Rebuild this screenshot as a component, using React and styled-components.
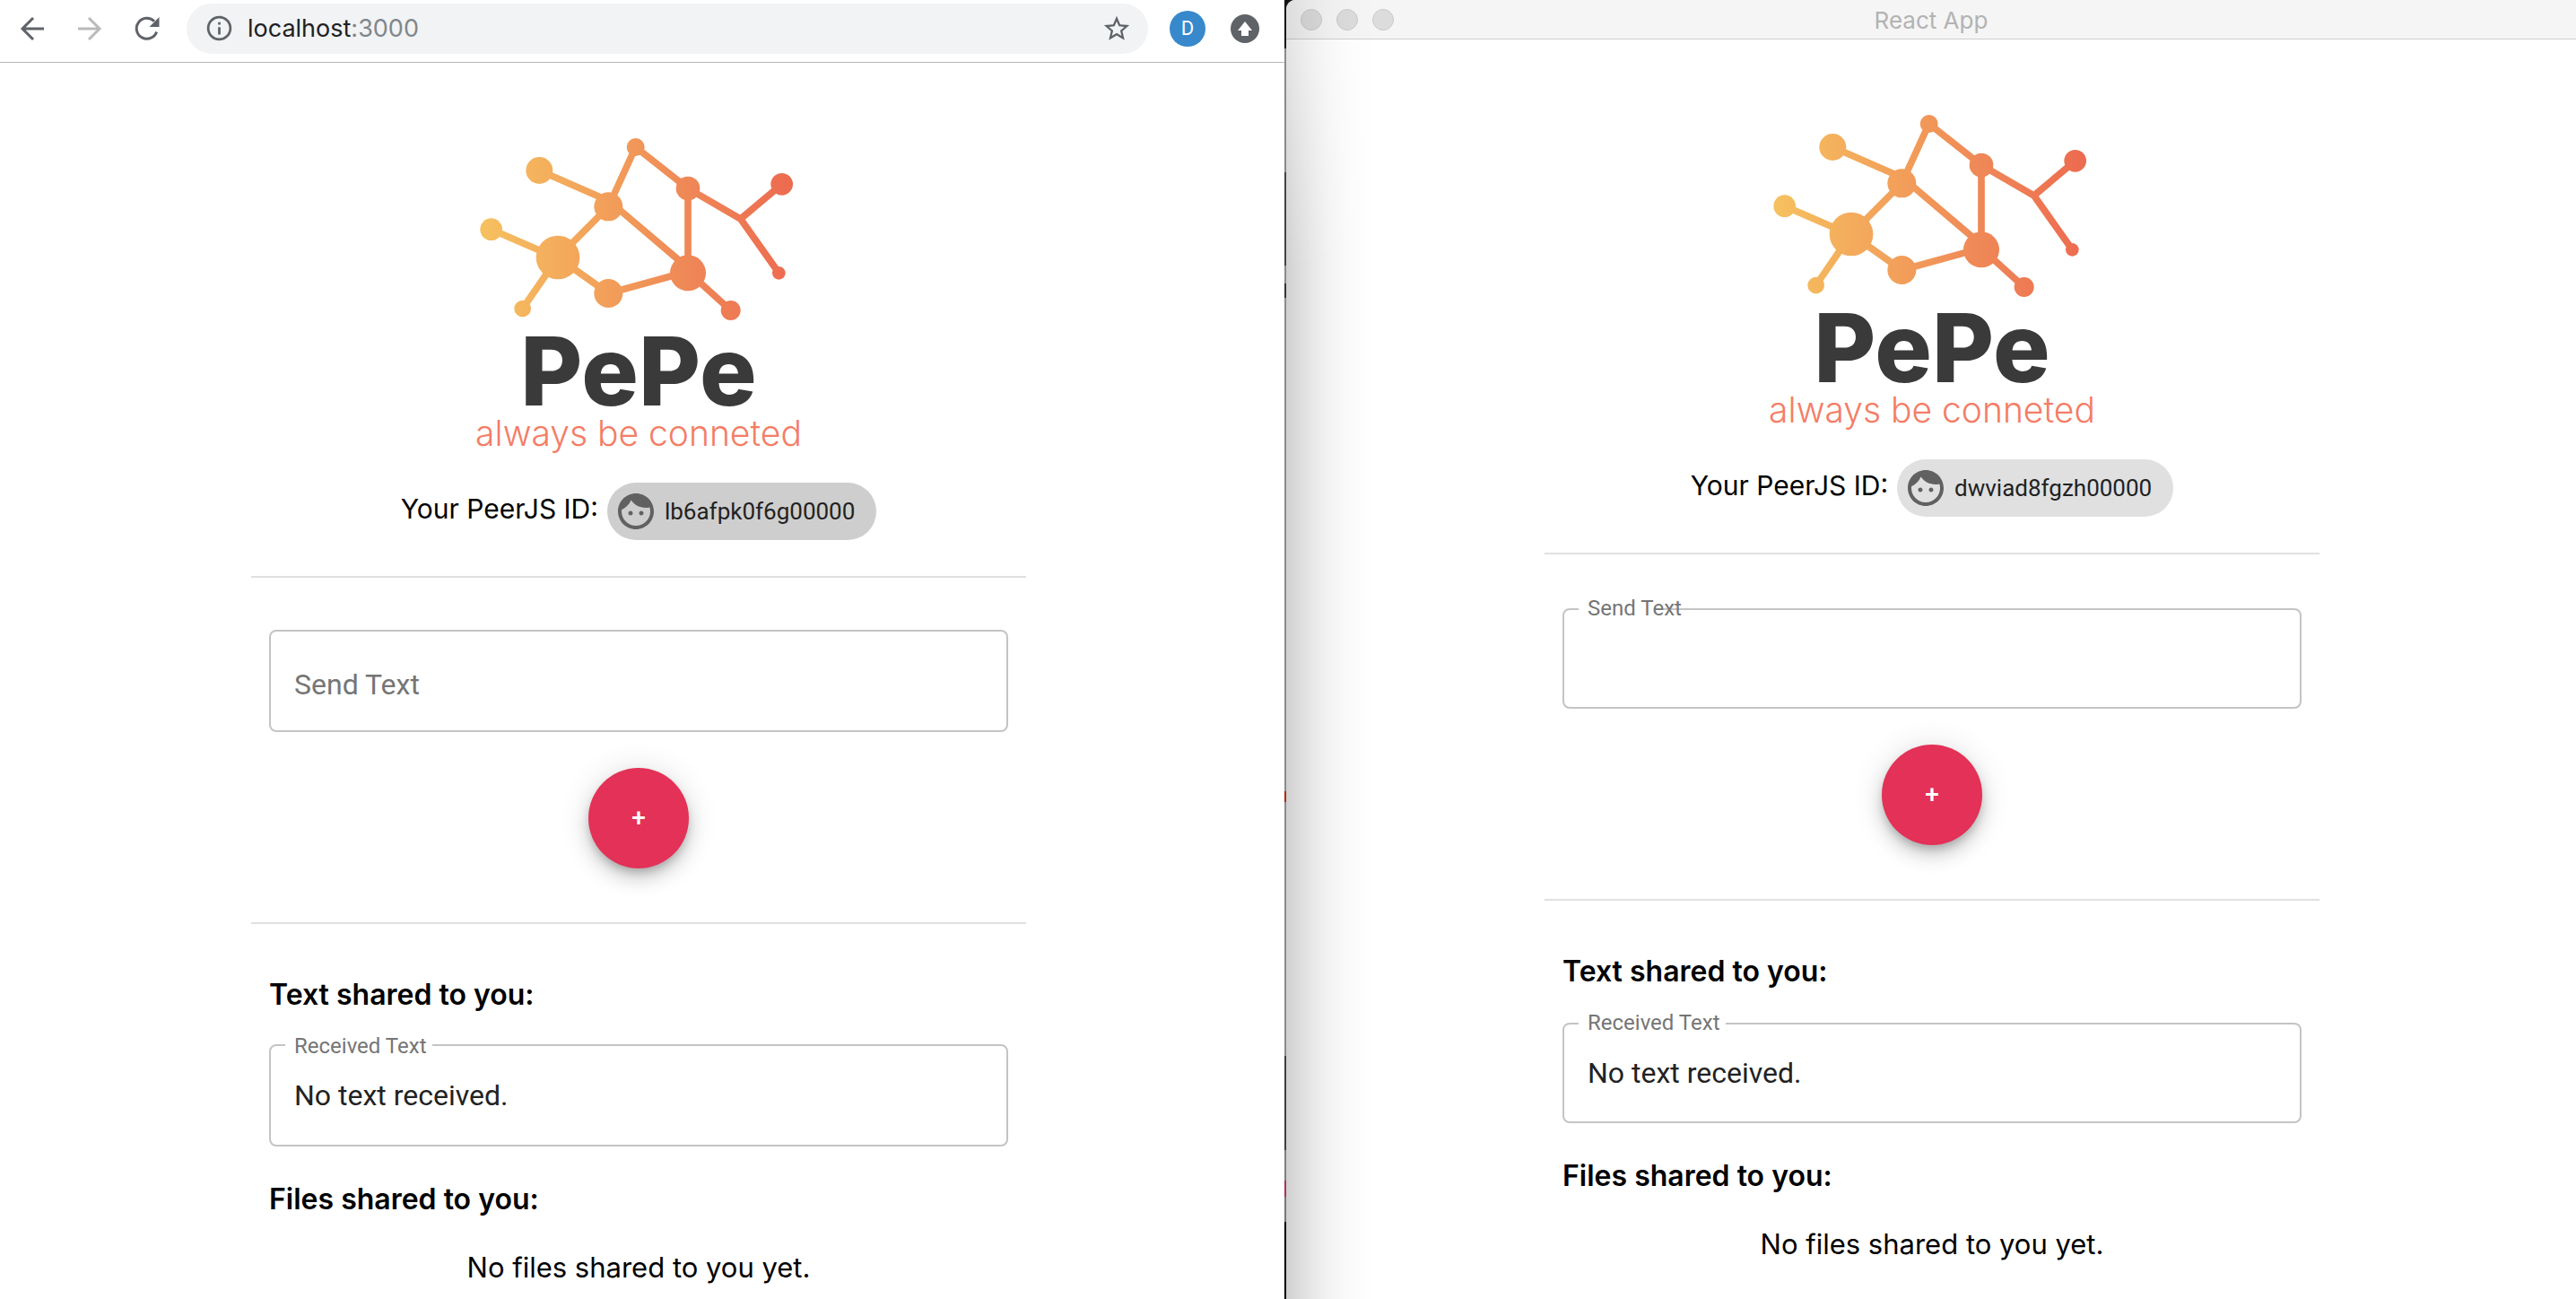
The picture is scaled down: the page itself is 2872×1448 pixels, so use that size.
import React, { useId } from "react";
import styled, { createGlobalStyle } from "styled-components";

const SYSTEM = `Inter, "Liberation Sans", sans-serif`;
const MATERIAL = `Roboto, "Liberation Sans", sans-serif`;

const GlobalStyle = createGlobalStyle`
  *, *::before, *::after { box-sizing: border-box; }
  body { margin: 0; background: #8c8c8c; font-family: ${SYSTEM}; color: #000; }
`;

const Desktop = styled.div`
  display: grid;
  grid-template-columns: 716fr 719fr;
  gap: 2px;
  min-height: 100vh;
  background: linear-gradient(
    #141414 0 54px, #8a8a8a 54px 192px, #444 192px 296px, #8a8a8a 296px 316px,
    #333 316px 332px, #8c8c8c 332px 882px, #b22a10 882px 894px, #8c8c8c 894px 1177px,
    #3e3e3e 1177px 1282px, #808080 1282px 1316px, #b0305c 1316px 1334px,
    #777 1334px 1362px, #000 1362px
  );
`;

const Window = styled.section`
  display: flex;
  flex-direction: column;
  background: #fff;
`;

const BackWindow = styled(Window)`
  position: relative;
  border-top-left-radius: 10px;
  overflow: hidden;

  &::after {
    content: "";
    position: absolute;
    inset: 0 auto 0 0;
    width: 96px;
    pointer-events: none;
    background: linear-gradient(
      90deg,
      rgba(0, 0, 0, 0.19) 0, rgba(0, 0, 0, 0.15) 10px, rgba(0, 0, 0, 0.1) 26px,
      rgba(0, 0, 0, 0.05) 46px, rgba(0, 0, 0, 0.02) 68px, rgba(0, 0, 0, 0) 96px
    );
    mask-image: linear-gradient(rgba(0, 0, 0, 0.5), #000 300px);
  }
`;

const Toolbar = styled.header`
  display: flex;
  align-items: center;
  height: 70px;
  padding: 0 28px 6px 16px;
  border-bottom: 1px solid #b6b6b8;
`;

const ToolButton = styled.button`
  display: grid;
  place-items: center;
  width: 40px;
  height: 40px;
  margin: 0 24px 0 0;
  padding: 0;
  border: 0;
  background: none;
  color: ${(p) => (p.disabled ? "#bababc" : "#5f6368")};
`;

const AddressBar = styled.div`
  display: flex;
  flex: 1;
  align-items: center;
  height: 56px;
  margin-right: 24px;
  padding: 0 18px 0 20px;
  border-radius: 28px;
  background: #f1f3f4;
  color: #5f6368;
`;

const Address = styled.span`
  flex: 1;
  margin-left: 15px;
  font-size: 27px;
  line-height: 32px;
  color: #202124;
`;

const Port = styled.span`
  color: #80868b;
`;

const PlainButton = styled.button`
  display: grid;
  place-items: center;
  padding: 0;
  border: 0;
  background: none;
  color: inherit;
`;

const Avatar = styled.button`
  width: 40px;
  height: 40px;
  margin-right: 28px;
  padding: 0;
  border: 0;
  border-radius: 50%;
  background: #3789cc;
  color: #fff;
  font: 400 22px/40px ${MATERIAL};
`;

const TitleBar = styled.header`
  display: grid;
  grid-template-columns: 1fr auto 1fr;
  align-items: center;
  height: 44px;
  padding: 0 16px;
  border-bottom: 1px solid #cfcfcf;
  background: #f5f5f5;
`;

const Lights = styled.div`
  display: flex;
  gap: 16px;
`;

const Light = styled.button`
  width: 24px;
  height: 24px;
  padding: 0;
  border: 1px solid #cbcbcb;
  border-radius: 50%;
  background: #dcdcdc;
`;

const WindowTitle = styled.h1`
  margin: 0;
  padding-top: 2px;
  font-size: 26px;
  font-weight: 400;
  line-height: 32px;
  color: #b3b3b3;
`;

const Page = styled.main`
  display: flex;
  flex-direction: column;
  align-self: center;
  width: 100%;
  max-width: 872px;
  padding: 60px ${(p) => (p.$tall ? "8px 0 0" : "3px 0 5px")};
`;

const Brand = styled.div`
  display: flex;
  flex-direction: column;
  align-items: center;
`;

const BrandName = styled.div`
  font-size: 106px;
  font-weight: 800;
  line-height: 96px;
  color: #3a3a3a;
`;

const Tagline = styled.div`
  font-size: 39px;
  font-weight: 300;
  line-height: 42px;
  color: #f47d66;
`;

const Identity = styled.div`
  display: flex;
  align-items: center;
  justify-content: center;
  gap: 10px;
  margin: 34px 0 40px;
`;

const IdentityLabel = styled.span`
  padding-bottom: 6px;
  font-size: 30px;
  line-height: 38px;
`;

const Chip = styled.button`
  display: flex;
  align-items: center;
  gap: 8px;
  height: 64px;
  padding: 0 24px 0 8px;
  border: 0;
  border-radius: 32px;
  background: ${(p) => (p.$active ? "#cecece" : "#e0e0e0")};
  color: #222;
  font: 400 26px/32px ${MATERIAL};

  svg { color: #616161; }
`;

const Divider = styled.hr`
  width: 100%;
  height: 2px;
  margin: 0;
  border: 0;
  background: #e0e0e0;
`;

const Sending = styled.form`
  display: flex;
  flex-direction: column;
  align-items: center;
  gap: 40px;
  padding: ${(p) => (p.$tall ? 58 : 60)}px 20px 60px;
`;

const FieldBox = styled.div`
  position: relative;
  width: 100%;
  height: ${(p) => (p.$tall ? 114 : 112)}px;
  border: 2px solid #c4c4c4;
  border-radius: 8px;
`;

const FieldInput = styled.input`
  display: block;
  width: 100%;
  height: 100%;
  padding: 0 26px;
  border: 0;
  outline: 0;
  background: none;
  color: #222;
  font: 400 32px/38px ${MATERIAL};
`;

const FieldLabel = styled.label`
  position: absolute;
  left: 26px;
  top: 40px;
  color: #757575;
  font: 400 32px/38px ${MATERIAL};
`;

const ShrunkLabel = styled.label`
  position: absolute;
  left: 16px;
  top: ${(p) => (p.$tall ? -14 : -16)}px;
  padding: 0 6px 0 10px;
  color: #757575;
  font: 400 24px/28px ${MATERIAL};
  background: linear-gradient(#fff, #fff) no-repeat 0 0 / ${(p) => p.$notch || "100%"} 100%;
`;

const AddButton = styled.button`
  width: 112px;
  height: 112px;
  padding: 0;
  border: 0;
  border-radius: 50%;
  background: #e33157;
  color: #fff;
  font: 500 28px/48px ${MATERIAL};
  box-shadow: 0 6px 10px -2px rgba(0, 0, 0, 0.2), 0 12px 20px rgba(0, 0, 0, 0.14),
    0 2px 36px rgba(0, 0, 0, 0.12);
`;

const Shared = styled.div`
  padding: 20px 20px 0;
`;

const Heading = styled.h2`
  margin: 40px 0 ${(p) => (p.$tight ? 36 : 38)}px;
  font-size: 32px;
  font-weight: 600;
  line-height: 38px;
`;

const Empty = styled.p`
  margin: 0;
  font-size: 31px;
  line-height: 38px;
  text-align: center;
`;

const NODES = [
  [304, 180, 45], [143, 377, 37], [366, 471, 73], [248, 642, 28], [535, 301, 48],
  [535, 591, 48], [626, 102, 30], [801, 240, 40], [801, 523, 60], [944, 648, 33],
  [1115, 226, 37], [1105, 523, 22],
];

const EDGES =
  "M304 180L535 281M143 377L366 474M366 471L248 642M366 471L535 301L626 102L801 240V523" +
  "M366 471L535 591L801 518L944 648M560 301L801 506M801 240L977 342L1115 226M977 342L1105 523";

function Graph() {
  const id = useId();
  return (
    <svg width="420" height="236" viewBox="6 0 1260 708" role="img" aria-label="PePe">
      <defs>
        <linearGradient id={id} gradientUnits="userSpaceOnUse" x1="106" y1="0" x2="1152" y2="0">
          <stop offset="0" stopColor="#f6c15f" />
          <stop offset="0.4" stopColor="#f29f5a" />
          <stop offset="0.66" stopColor="#ef8857" />
          <stop offset="1" stopColor="#ed6a50" />
        </linearGradient>
      </defs>
      <path d={EDGES} fill="none" stroke={`url(#${id})`} strokeWidth="23" />
      {NODES.map(([x, y, r]) => (
        <circle key={`${x}-${y}`} cx={x} cy={y} r={r} fill={`url(#${id})`} />
      ))}
    </svg>
  );
}

function Glyph({ size, d }) {
  return (
    <svg width={size} height={size} viewBox="0 0 24 24" fill="currentColor" aria-hidden="true">
      <path d={d} />
    </svg>
  );
}

const FACE =
  "M9 11.75c-.69 0-1.25.56-1.25 1.25s.56 1.25 1.25 1.25 1.25-.56 1.25-1.25-.56-1.25-1.25-1.25zm6 0c-.69 0-1.25.56-1.25 1.25s.56 1.25 1.25 1.25 1.25-.56 1.25-1.25-.56-1.25-1.25-1.25zM12 2C6.48 2 2 6.48 2 12s4.48 10 10 10 10-4.48 10-10S17.52 2 12 2zm0 18c-4.41 0-8-3.59-8-8 0-.29.02-.58.05-.86 2.36-1.05 4.23-2.98 5.21-5.37C11.07 8.33 14.05 10 17.42 10c.78 0 1.53-.09 2.25-.26.21.71.33 1.47.33 2.26 0 4.41-3.59 8-8 8z";
const INFO =
  "M11 7h2v2h-2zm0 4h2v6h-2zm1-9C6.48 2 2 6.48 2 12s4.48 10 10 10 10-4.48 10-10S17.52 2 12 2zm0 18c-4.41 0-8-3.59-8-8s3.59-8 8-8 8 3.59 8 8-3.59 8-8 8z";
const STAR =
  "M22 9.24l-7.19-.62L12 2 9.19 8.63 2 9.24l5.46 4.73L5.82 21 12 17.27 18.18 21l-1.63-7.03L22 9.24zM12 15.4l-3.76 2.27 1-4.28-3.32-2.88 4.38-.38L12 6.1l1.71 4.04 4.38.38-3.32 2.88 1 4.28L12 15.4z";

function Arrow({ flip }) {
  return (
    <svg width="28" height="28" viewBox="0 0 28 28" fill="none" stroke="currentColor" strokeWidth="3" aria-hidden="true">
      <path d={flip ? "M1 14H25M13 2L25 14L13 26" : "M27 14H3M15 2L3 14L15 26"} />
    </svg>
  );
}

function Reload() {
  return (
    <svg width="28" height="28" viewBox="0 0 28 28" aria-hidden="true">
      <path d="M24.6 17.5A11.5 11.5 0 1 1 22 5.8" fill="none" stroke="currentColor" strokeWidth="3" />
      <path d="M27.5 1V12H16.5Z" fill="currentColor" />
    </svg>
  );
}

function Update() {
  return (
    <svg width="32" height="32" viewBox="0 0 32 32" aria-hidden="true">
      <circle cx="16" cy="16" r="16" fill="#5f6368" />
      <path d="M16 8L24 18H20V24H12V18H8Z" fill="#fff" />
    </svg>
  );
}

function SharePage({ peerId, tall }) {
  const sendId = useId();
  const receivedId = useId();
  return (
    <Page $tall={tall}>
      <Brand>
        <Graph />
        <BrandName>PePe</BrandName>
        <Tagline>always be conneted</Tagline>
      </Brand>
      <Identity>
        <IdentityLabel>Your PeerJS ID:</IdentityLabel>
        <Chip type="button" $active={tall}>
          <Glyph size={48} d={FACE} />
          <span>{peerId}</span>
        </Chip>
      </Identity>
      <Divider />
      <Sending $tall={tall} onSubmit={(e) => e.preventDefault()}>
        <FieldBox $tall={tall}>
          <FieldInput id={sendId} type="text" />
          {tall ? (
            <FieldLabel htmlFor={sendId}>Send Text</FieldLabel>
          ) : (
            <ShrunkLabel htmlFor={sendId} $notch="92px">Send Text</ShrunkLabel>
          )}
        </FieldBox>
        <AddButton type="submit">+</AddButton>
      </Sending>
      <Divider />
      <Shared>
        <Heading $tight={tall}>Text shared to you:</Heading>
        <FieldBox $tall={tall}>
          <FieldInput id={receivedId} type="text" readOnly defaultValue="No text received." />
          <ShrunkLabel htmlFor={receivedId} $tall={tall}>Received Text</ShrunkLabel>
        </FieldBox>
        <Heading>Files shared to you:</Heading>
        <Empty>No files shared to you yet.</Empty>
      </Shared>
    </Page>
  );
}

export default function App() {
  return (
    <Desktop>
      <GlobalStyle />
      <Window aria-label="localhost:3000">
        <Toolbar>
          <ToolButton type="button" aria-label="Back"><Arrow /></ToolButton>
          <ToolButton type="button" aria-label="Forward" disabled><Arrow flip /></ToolButton>
          <ToolButton type="button" aria-label="Reload"><Reload /></ToolButton>
          <AddressBar>
            <Glyph size={33} d={INFO} />
            <Address>localhost<Port>:3000</Port></Address>
            <PlainButton type="button" aria-label="Bookmark"><Glyph size={34} d={STAR} /></PlainButton>
          </AddressBar>
          <Avatar type="button">D</Avatar>
          <PlainButton type="button" aria-label="Update"><Update /></PlainButton>
        </Toolbar>
        <SharePage peerId="lb6afpk0f6g00000" tall />
      </Window>
      <BackWindow aria-label="React App">
        <TitleBar>
          <Lights>
            <Light type="button" aria-label="Close" />
            <Light type="button" aria-label="Minimise" />
            <Light type="button" aria-label="Zoom" />
          </Lights>
          <WindowTitle>React App</WindowTitle>
        </TitleBar>
        <SharePage peerId="dwviad8fgzh00000" />
      </BackWindow>
    </Desktop>
  );
}
